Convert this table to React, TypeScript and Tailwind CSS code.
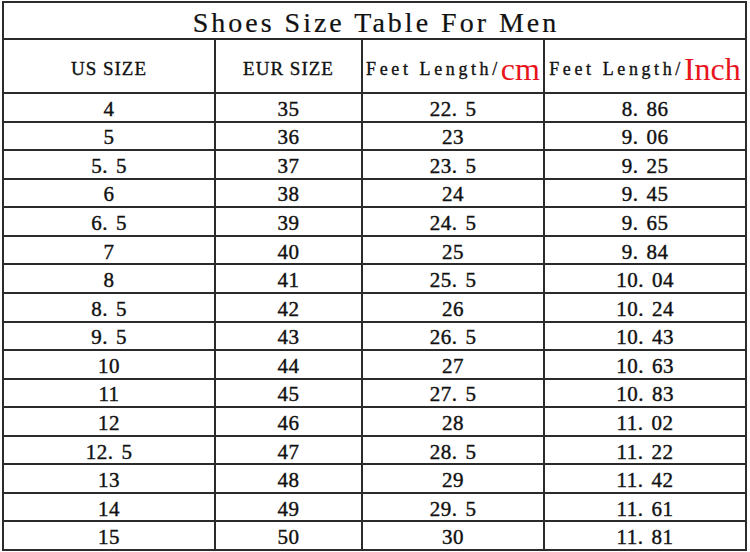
import React from "react";

const rows: [string, string, string, string][] = [
  ["4", "35", "22.5", "8.86"],
  ["5", "36", "23", "9.06"],
  ["5.5", "37", "23.5", "9.25"],
  ["6", "38", "24", "9.45"],
  ["6.5", "39", "24.5", "9.65"],
  ["7", "40", "25", "9.84"],
  ["8", "41", "25.5", "10.04"],
  ["8.5", "42", "26", "10.24"],
  ["9.5", "43", "26.5", "10.43"],
  ["10", "44", "27", "10.63"],
  ["11", "45", "27.5", "10.83"],
  ["12", "46", "28", "11.02"],
  ["12.5", "47", "28.5", "11.22"],
  ["13", "48", "29", "11.42"],
  ["14", "49", "29.5", "11.61"],
  ["15", "50", "30", "11.81"],
];

function Num({ v }: { v: string }) {
  const i = v.indexOf(".");
  if (i < 0) return <span className="tracking-[0.5px]">{v}</span>;
  return (
    <span className="tracking-[0.5px]">
      {v.slice(0, i)}
      <span className="mr-[8px]">.</span>
      {v.slice(i + 1)}
    </span>
  );
}

export default function App() {
  return (
    <div className="w-[750px] h-[552px] bg-white">
      <div className="ml-[2px] mt-[1px] w-[745px] h-[550px] bg-[#2b2b2b] p-[2px] grid gap-[2px] grid-cols-[210px_145px_180px_200px] grid-rows-[35px_52px_repeat(16,minmax(0,1fr))] text-[#111] font-['Liberation_Serif',serif]">
        <div className="col-span-4 bg-white flex items-center justify-center pt-[4px] text-[28px] leading-none tracking-[3px] pl-[3px] [-webkit-text-stroke:0.2px_#111]">
          Shoes Size Table For Men
        </div>
        <div className="bg-white flex items-center justify-center pt-[4px] text-[19px] leading-none tracking-[1px] [-webkit-text-stroke:0.35px_#111]">
          US SIZE
        </div>
        <div className="bg-white flex items-center justify-center pt-[4px] text-[19px] leading-none tracking-[1px] [-webkit-text-stroke:0.35px_#111]">
          EUR SIZE
        </div>
        <div className="bg-white flex items-center justify-center pt-[6px] whitespace-nowrap overflow-visible">
          <span className="text-[18px] leading-none tracking-[3.6px] [-webkit-text-stroke:0.35px_#111]">
            Feet Length/
          </span>
          <span className="text-[32px] leading-none text-[#e8141c]">cm</span>
        </div>
        <div className="bg-white flex items-center justify-center pt-[6px] whitespace-nowrap overflow-visible">
          <span className="text-[18px] leading-none tracking-[3.6px] [-webkit-text-stroke:0.35px_#111]">
            Feet Length/
          </span>
          <span className="text-[32px] leading-none text-[#e8141c]">Inch</span>
        </div>
        {rows.map((r, i) =>
          r.map((c, j) => (
            <div
              key={`${i}-${j}`}
              className="bg-white flex items-center justify-center pt-[4px] text-[21px] leading-none [-webkit-text-stroke:0.4px_#111]"
            >
              <Num v={c} />
            </div>
          ))
        )}
      </div>
    </div>
  );
}
